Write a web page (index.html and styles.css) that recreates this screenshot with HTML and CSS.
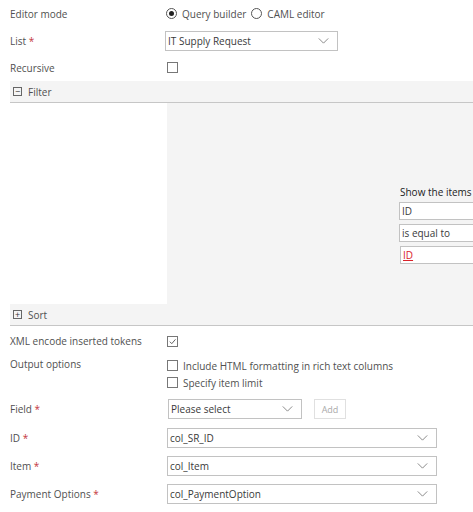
FILE: index.html
```html
<!DOCTYPE html>
<html>
<head>
  <title>List Query Settings</title>
  <link rel="stylesheet" href="styles.css">
</head>
<body>
  <div class="form">
    <div class="row">
      <div class="label">Editor mode</div>
      <div class="control">
        <span class="radio checked"></span><span class="opt">Query builder</span>
        <span class="radio"></span><span class="opt">CAML editor</span>
      </div>
    </div>
    <div class="row">
      <div class="label">List <span class="req">*</span></div>
      <div class="control">
        <div class="select list-select"><span>IT Supply Request</span><svg class="chev" viewBox="0 0 12 7"><path d="M0.5 0.5 L6 6 L11.5 0.5" /></svg></div>
      </div>
    </div>
    <div class="row">
      <div class="label">Recursive</div>
      <div class="control"><span class="check"></span></div>
    </div>

    <div class="band"><span class="toggle">&minus;</span>Filter</div>
    <div class="filter-body">
      <div class="condition">
        <div class="cond-title">Show the items</div>
        <div class="cond-box">ID</div>
        <div class="cond-box">is equal to</div>
        <div class="cond-box token"><a href="#">ID</a></div>
      </div>
    </div>
    <div class="band sort"><span class="toggle">+</span>Sort</div>

    <div class="row short">
      <div class="label">XML encode inserted tokens</div>
      <div class="control"><span class="check on"><svg viewBox="0 0 10 10"><path d="M2 5.2 L4.2 7.4 L8.3 2.6" /></svg></span></div>
    </div>
    <div class="row options">
      <div class="label">Output options</div>
      <div class="control stack">
        <div class="line"><span class="check"></span>Include HTML formatting in rich text columns</div>
        <div class="line"><span class="check"></span>Specify item limit</div>
      </div>
    </div>
    <div class="row field">
      <div class="label">Field <span class="req">*</span></div>
      <div class="control">
        <div class="select field-select"><span>Please select</span><svg class="chev" viewBox="0 0 12 7"><path d="M0.5 0.5 L6 6 L11.5 0.5" /></svg></div>
        <button class="add" disabled>Add</button>
      </div>
    </div>
    <div class="row map">
      <div class="label">ID <span class="req">*</span></div>
      <div class="control"><div class="select wide"><span>col_SR_ID</span><svg class="chev" viewBox="0 0 12 7"><path d="M0.5 0.5 L6 6 L11.5 0.5" /></svg></div></div>
    </div>
    <div class="row map">
      <div class="label">Item <span class="req">*</span></div>
      <div class="control"><div class="select wide"><span>col_Item</span><svg class="chev" viewBox="0 0 12 7"><path d="M0.5 0.5 L6 6 L11.5 0.5" /></svg></div></div>
    </div>
    <div class="row map">
      <div class="label">Payment Options <span class="req">*</span></div>
      <div class="control"><div class="select wide"><span>col_PaymentOption</span><svg class="chev" viewBox="0 0 12 7"><path d="M0.5 0.5 L6 6 L11.5 0.5" /></svg></div></div>
    </div>
  </div>
</body>
</html>
```

FILE: styles.css
```css
body {
  margin: 0;
  font-family: 'Open Sans', 'Noto Sans', sans-serif;
  font-size: 10px;
  color: #505050;
  background: #fff;
  overflow: hidden;
}
.form {
  width: 473px;
}
.row {
  display: flex;
  align-items: center;
  height: 27px;
  padding-left: 10px;
}
.label {
  width: 155px;
  flex: none;
}
.req {
  color: #c4363c;
}
.control {
  display: flex;
  align-items: center;
}
.radio {
  width: 11px;
  height: 11px;
  border: 1px solid #555;
  border-radius: 50%;
  box-sizing: border-box;
  margin: 0 5px 0 1px;
  position: relative;
}
.radio.checked::after {
  content: '';
  position: absolute;
  left: 2px;
  top: 2px;
  width: 5px;
  height: 5px;
  border-radius: 50%;
  background: #222;
}
.opt {
  margin-right: 4px;
}
.select {
  display: flex;
  align-items: center;
  justify-content: space-between;
  height: 20px;
  box-sizing: border-box;
  border: 1px solid #c2c2c2;
  background: #fff;
  padding: 0 8px 0 2px;
  color: #3a3a3a;
}
.chev {
  width: 11px;
  height: 6px;
  fill: none;
  stroke: #777;
  stroke-width: 1;
}
.list-select {
  width: 173px;
}
.check {
  width: 11px;
  height: 11px;
  box-sizing: border-box;
  border: 1px solid #777;
  background: #fff;
  margin-left: 2px;
  display: inline-flex;
}
.check svg {
  width: 9px;
  height: 9px;
  fill: none;
  stroke: #555;
  stroke-width: 1;
}
.band {
  margin-left: 10px;
  height: 21px;
  background: #f4f4f4;
  border-bottom: 1px solid #c6c6c6;
  display: flex;
  align-items: center;
}
.toggle {
  width: 9px;
  height: 9px;
  box-sizing: border-box;
  border: 1px solid #666;
  font-size: 9px;
  line-height: 7px;
  text-align: center;
  margin: 0 6px 0 3px;
  color: #333;
}
.filter-body {
  margin-left: 167px;
  height: 201px;
  background: #f4f4f4;
  padding: 79px 0 0 232px;
  box-sizing: border-box;
  overflow: hidden;
}
.cond-title {
  height: 20px;
  line-height: 20px;
  color: #222;
  white-space: nowrap;
  padding-left: 1px;
}
.cond-box {
  height: 18px;
  width: 90px;
  box-sizing: border-box;
  border: 1px solid #c2c2c2;
  background: #fff;
  padding-left: 2px;
  line-height: 16px;
  margin-bottom: 4px;
  color: #3a3a3a;
}
.cond-box.token {
  margin-left: 1px;
}
.token a {
  color: #d9232a;
}
.row.short {
  height: 30px;
}
.row.options {
  height: auto;
  align-items: flex-start;
  padding-top: 1px;
}
.stack {
  flex-direction: column;
  align-items: flex-start;
}
.line {
  display: flex;
  align-items: center;
  height: 17px;
}
.line .check {
  margin-right: 5px;
}
.row.field {
  height: 30px;
  margin-top: 3px;
}
.field-select {
  width: 134px;
  margin-left: 3px;
}
.add {
  margin-left: 12px;
  height: 20px;
  width: 32px;
  border: 1px solid #e0e0e0;
  background: #fff;
  color: #aaa;
  font-family: inherit;
  font-size: 9px;
  padding: 0;
}
.row.map {
  height: 28px;
}
.wide {
  width: 270px;
  margin-left: 2px;
}
```
